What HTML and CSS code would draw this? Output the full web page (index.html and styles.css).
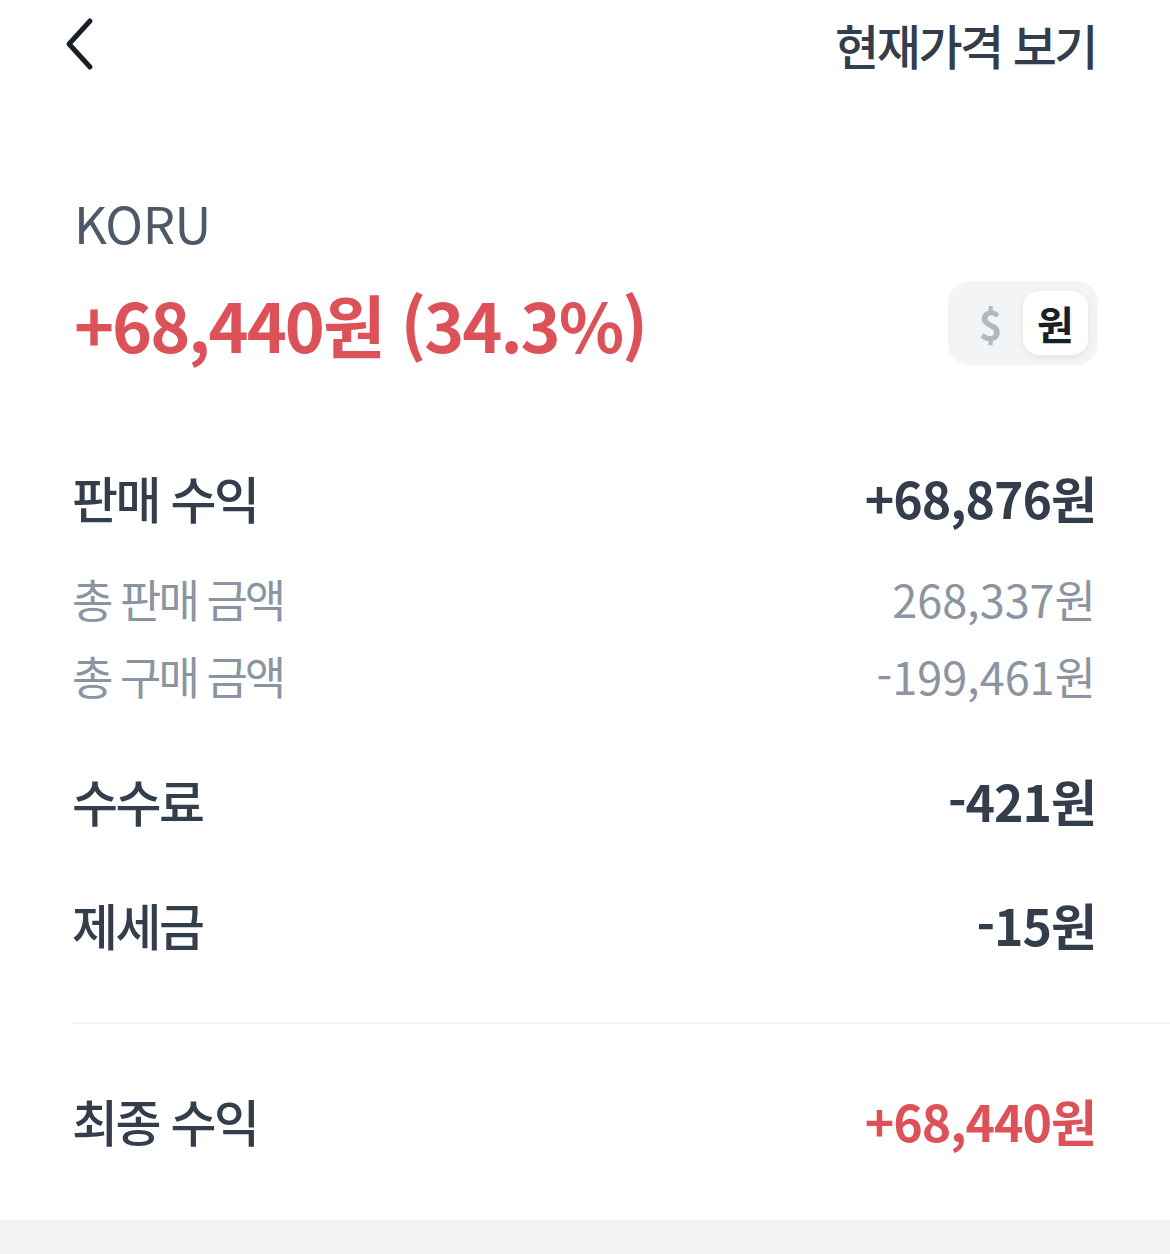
FILE: index.html
```html
<!DOCTYPE html>
<html lang="ko">
<head>
  <meta charset="utf-8">
  <title>KORU 수익</title>
  <link rel="stylesheet" href="styles.css">
</head>
<body>
  <div class="top-bar">
    <svg class="back" width="34" height="54" viewBox="0 0 34 54">
      <path d="M28 4 L7 27 L28 50" fill="none" stroke="#191f28" stroke-width="5" stroke-linecap="round" stroke-linejoin="round"/>
    </svg>
    <span class="top-link">현재가격 보기</span>
  </div>

  <div class="summary">
    <div class="ticker">KORU</div>
    <div class="profit-line">
      <span class="profit">+68,440원 (34.3%)</span>
      <div class="toggle">
        <span class="toggle-item">$</span>
        <span class="toggle-item active">원</span>
      </div>
    </div>
  </div>

  <div class="details">
    <div class="row main">
      <span class="label">판매 수익</span>
      <span class="value">+68,876원</span>
    </div>
    <div class="row sub first-sub">
      <span class="label">총 판매 금액</span>
      <span>268,337원</span>
    </div>
    <div class="row sub">
      <span class="label">총 구매 금액</span>
      <span>-199,461원</span>
    </div>
    <div class="row main spaced">
      <span class="label">수수료</span>
      <span class="value">-421원</span>
    </div>
    <div class="row main spaced">
      <span class="label">제세금</span>
      <span class="value">-15원</span>
    </div>
  </div>

  <div class="divider"></div>

  <div class="row main total">
    <span class="label">최종 수익</span>
    <span class="value red">+68,440원</span>
  </div>

  <div class="footer-band"></div>
</body>
</html>
```

FILE: styles.css
```css
body {
  margin: 0;
  background-color: #fff;
  font-family: "Noto Sans CJK KR", "Noto Sans", sans-serif;
  color: #333d4b;
}

.top-bar {
  height: 88px;
  padding: 0 74px 0 62px;
  display: flex;
  justify-content: space-between;
  align-items: center;
}

.top-link {
  font-size: 48px;
  font-weight: 500;
  color: #333d4b;
  letter-spacing: -2.5px;
}

.summary {
  padding: 0 72px 0 74px;
  margin-top: 102px;
}

.ticker {
  font-size: 51px;
  line-height: 64px;
  color: #4e5968;
  font-weight: 400;
  letter-spacing: -0.5px;
}

.profit-line {
  margin-top: 27px;
  height: 84px;
  display: flex;
  justify-content: space-between;
  align-items: center;
}

.profit {
  font-size: 68px;
  font-weight: 700;
  color: #dd5158;
  letter-spacing: -2px;
}

.toggle {
  display: flex;
  align-items: center;
  background-color: #f2f4f6;
  border-radius: 22px;
  padding: 10px;
  height: 64px;
}

.toggle-item {
  width: 65px;
  height: 64px;
  display: flex;
  align-items: center;
  justify-content: center;
  font-size: 40px;
  font-weight: 700;
  color: #b0b8c1;
}

.toggle-item.active {
  background-color: #fff;
  color: #191f28;
  border-radius: 16px;
  box-shadow: 0 2px 6px rgba(0, 0, 0, 0.08);
}

.details {
  margin-top: 94px;
}

.row {
  display: flex;
  justify-content: space-between;
  align-items: center;
  padding: 0 74px 0 72px;
}

.row.main {
  height: 76px;
  font-size: 50px;
  font-weight: 500;
  color: #333d4b;
}

.row.main .label {
  letter-spacing: -2.5px;
}

.row .value {
  font-weight: 700;
  letter-spacing: -1px;
}

.row.sub {
  height: 77px;
  font-size: 45px;
  color: #8b95a1;
}

.row.sub .label {
  letter-spacing: -3px;
}

.row.first-sub {
  margin-top: 25px;
}

.row.spaced {
  margin-top: 48px;
}

.divider {
  margin: 60px 0 0 72px;
  height: 2px;
  background-color: #f2f4f6;
}

.row.total {
  margin-top: 58px;
}

.red {
  color: #dd5158;
}

.footer-band {
  margin-top: 62px;
  height: 40px;
  background-color: #f2f4f6;
}
```
